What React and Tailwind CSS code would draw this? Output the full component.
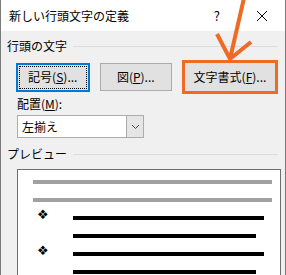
import React from "react";

const jp = { fontFamily: '"Noto Sans CJK JP", "Noto Sans", sans-serif' };

const Btn = ({ children, className = "" }) => (
  <div
    className={`flex h-[28px] items-center justify-center bg-[#e1e1e1] text-[12px] text-black ${className}`}
  >
    {children}
  </div>
);

export default function App() {
  return (
    <div
      className="relative flex h-[275px] w-[286px] flex-col overflow-hidden border-x border-[#7a7a7a] bg-[#f0f0f0]"
      style={jp}
    >
      {/* title bar */}
      <div className="flex h-[31px] shrink-0 items-center bg-white pl-[8px]">
        <span className="text-[12px] text-black">新しい行頭文字の定義</span>
        <span className="ml-auto mr-[36px] text-[13px] text-black">?</span>
        <svg width="12" height="12" viewBox="0 0 12 12" className="mr-[17px]">
          <path d="M1 1 L11 11 M11 1 L1 11" stroke="#000" strokeWidth="1" />
        </svg>
      </div>

      {/* body */}
      <div className="flex flex-col pl-[6px] pr-[7px] leading-[14px]">
        <div className="mt-[8px] flex h-[14px] items-center">
          <span className="text-[12px] leading-[14px]">行頭の文字</span>
          <div className="ml-[6px] h-px flex-1 bg-[#dcdcdc]" />
        </div>

        <div className="mt-[7px] flex items-center pl-[9px]">
          <div className="flex h-[29px] w-[75px] items-center justify-center border-2 border-[#0078d7] bg-[#e1e1e1] p-px">
            <div className="flex h-full w-full items-center justify-center border border-dotted border-black text-[12px]">
              記号(<span className="underline">S</span>)...
            </div>
          </div>
          <Btn className="ml-[10px] w-[74px] border border-[#adadad]">
            図(<span className="underline">P</span>)...
          </Btn>
          <div className="ml-[10px] border-[3px] border-[#ef6a23]">
            <Btn className="h-[22px] w-[90px]">
              文字書式(<span className="underline">F</span>)...
            </Btn>
          </div>
        </div>

        <div className="mt-[3px] h-[14px] pl-[10px] text-[12px] leading-[14px]">
          配置(<span className="underline">M</span>):
        </div>

        <div className="ml-[10px] mt-[4px] flex h-[23px] w-[127px] border border-[#acacac] bg-white">
          <div className="flex flex-1 items-center pl-[4px] text-[12px]">左揃え</div>
          <div className="flex w-[17px] items-center justify-center border-l border-[#acacac] bg-[#e5e5e5]">
            <svg width="9" height="6" viewBox="0 0 9 6">
              <path d="M1 1 L4.5 4.5 L8 1" fill="none" stroke="#444" strokeWidth="1" />
            </svg>
          </div>
        </div>

        <div className="mt-[9px] flex h-[14px] items-center">
          <span className="text-[12px] leading-[14px]">プレビュー</span>
          <div className="ml-[6px] h-px flex-1 bg-[#dcdcdc]" />
        </div>

        {/* preview box */}
        <div className="ml-[10px] mt-[8px] flex h-[120px] w-[264px] flex-col border border-[#6d6d6d] bg-white">
          <div className="ml-[15px] mt-[10px] h-[4px] w-[239px] bg-[#a0a0a0]" />
          <div className="ml-[15px] mt-[14px] h-[4px] w-[239px] bg-[#a0a0a0]" />
          {[191, 183, 191, 183].map((w, i) => (
            <div key={i} className="mt-[14px] flex h-[4px] items-start">
              <span
                className={`-mt-[8px] ml-[19px] w-[36px] text-[13px] leading-[13px] text-black ${i % 2 ? "invisible" : ""}`}
                style={{ fontFamily: '"DejaVu Sans", sans-serif' }}
              >
                ❖
              </span>
              <div className="h-[4px] bg-black" style={{ width: w }} />
            </div>
          ))}
        </div>
      </div>

      {/* annotation arrow */}
      <svg
        className="pointer-events-none absolute left-[205px] top-0"
        width="55"
        height="66"
        viewBox="205 0 55 66"
      >
        <path
          d="M243 -2 L229 59 M216 34 L229 59 L250 42"
          fill="none"
          stroke="#ef6a23"
          strokeWidth="4"
          strokeLinejoin="miter"
        />
      </svg>
    </div>
  );
}
